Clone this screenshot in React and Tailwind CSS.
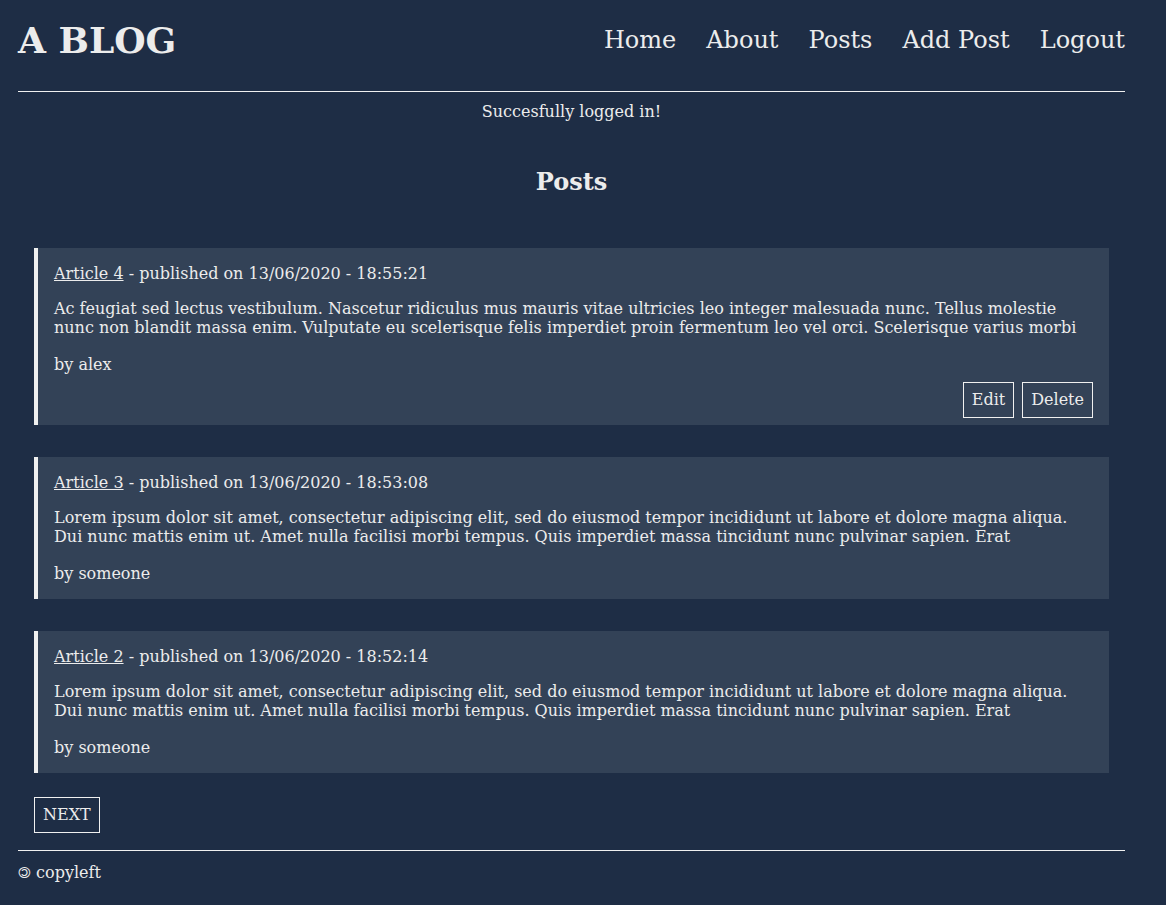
import React from "react";

const posts = [
  {
    title: "Article 4",
    date: "13/06/2020 - 18:55:21",
    body:
      "Ac feugiat sed lectus vestibulum. Nascetur ridiculus mus mauris vitae ultricies leo integer malesuada nunc. Tellus molestie nunc non blandit massa enim. Vulputate eu scelerisque felis imperdiet proin fermentum leo vel orci. Scelerisque varius morbi",
    author: "alex",
    own: true,
  },
  {
    title: "Article 3",
    date: "13/06/2020 - 18:53:08",
    body:
      "Lorem ipsum dolor sit amet, consectetur adipiscing elit, sed do eiusmod tempor incididunt ut labore et dolore magna aliqua. Dui nunc mattis enim ut. Amet nulla facilisi morbi tempus. Quis imperdiet massa tincidunt nunc pulvinar sapien. Erat",
    author: "someone",
  },
  {
    title: "Article 2",
    date: "13/06/2020 - 18:52:14",
    body:
      "Lorem ipsum dolor sit amet, consectetur adipiscing elit, sed do eiusmod tempor incididunt ut labore et dolore magna aliqua. Dui nunc mattis enim ut. Amet nulla facilisi morbi tempus. Quis imperdiet massa tincidunt nunc pulvinar sapien. Erat",
    author: "someone",
  },
];

const PostCard = ({ post }) => (
  <div className="bg-[#334257] border-l-4 border-[#f0f0f0] pl-4 pr-4 pt-4 pb-4">
    <p className="leading-[19px]">
      <a href="#" className="underline">
        {post.title}
      </a>{" "}
      - published on {post.date}
    </p>
    <p className="mt-4 leading-[19px] pr-[10px]">{post.body}</p>
    <p className="mt-[18px] leading-[19px]">by {post.author}</p>
    {post.own && (
      <div className="flex justify-end gap-2 mt-2 -mb-[9px]">
        <button className="border border-[#f0f0f0] h-9 px-2">Edit</button>
        <button className="border border-[#f0f0f0] h-9 px-2">Delete</button>
      </div>
    )}
  </div>
);

export default function App() {
  return (
    <div
      className="min-h-[905px] bg-[#1e2d45] text-[#ececec] text-base"
      style={{ fontFamily: '"DejaVu Serif", serif' }}
    >
      <div className="ml-[18px] w-[1107px]">
        <header className="flex items-center justify-between h-[81px] pb-[2px]">
          <h1 className="text-[36px] font-bold">A BLOG</h1>
          <nav className="flex gap-[30px] text-[24px]">
            <a href="#">Home</a>
            <a href="#">About</a>
            <a href="#">Posts</a>
            <a href="#">Add Post</a>
            <a href="#">Logout</a>
          </nav>
        </header>
        <div className="mt-[10px] border-t border-[#f0f0f0]" />
        <p className="text-center mt-[10px] leading-[19px]">Succesfully logged in!</p>
        <h2 className="text-center text-2xl font-bold mt-[49px] leading-[24px]">Posts</h2>
        <div className="mx-4 mt-[54px] flex flex-col gap-8">
          {posts.map((p) => (
            <PostCard key={p.title} post={p} />
          ))}
        </div>
        <button className="ml-4 mt-6 border border-[#f0f0f0] h-9 px-2">NEXT</button>
        <div className="mt-[17px] border-t border-[#f0f0f0]" />
        <p className="mt-[12px] leading-[19px]">
          <span style={{ fontFamily: '"DejaVu Sans", sans-serif' }} className="text-[16px]">
            🄯
          </span>{" "}
          copyleft
        </p>
      </div>
    </div>
  );
}
